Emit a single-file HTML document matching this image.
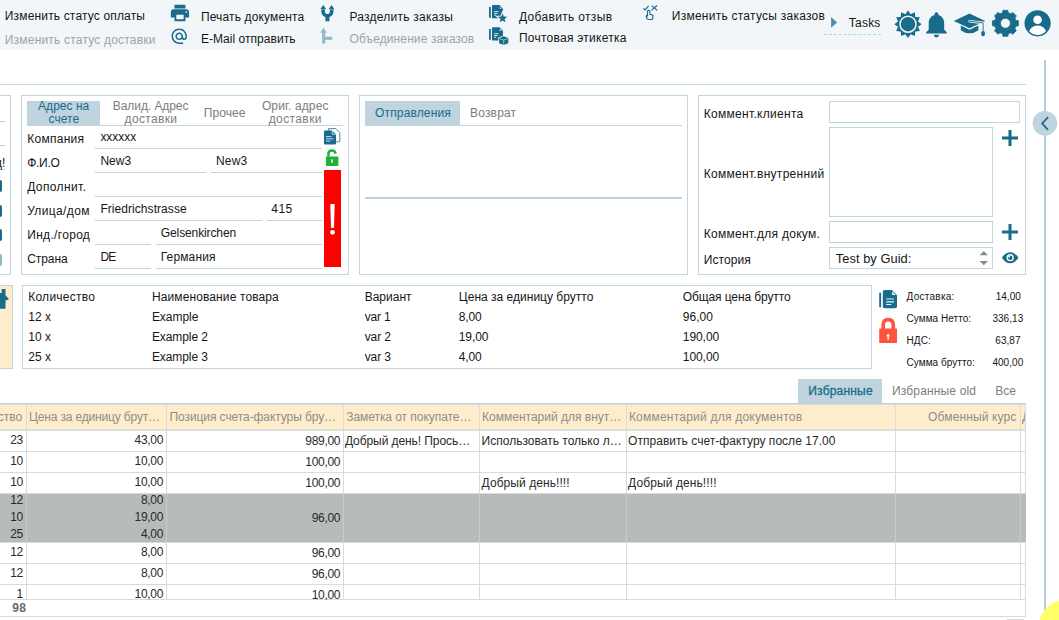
<!DOCTYPE html>
<html lang="ru"><head><meta charset="utf-8"><title>Orders</title>
<style>
html,body{margin:0;padding:0;background:#fff;}
body{width:1059px;height:620px;position:relative;overflow:hidden;font-family:"Liberation Sans",sans-serif;}
.t{position:absolute;white-space:nowrap;line-height:16px;font-size:12px;}
.r{position:absolute;}
svg{position:absolute;overflow:visible;}
</style></head><body>
<div class="r" style="left:0px;top:0px;width:1059px;height:50px;background:#f2f6f8;"></div>
<span class="t" style="top:8px;font-size:12px;color:#161616;letter-spacing:0.161px;left:4.80px;">Изменить статус оплаты</span>
<span class="t" style="top:32px;font-size:12px;color:#a2a2a2;letter-spacing:0.196px;left:4.80px;">Изменить статус доставки</span>
<span class="t" style="top:9px;font-size:12px;color:#161616;letter-spacing:0.144px;left:200.90px;">Печать документа</span>
<span class="t" style="top:31px;font-size:12px;color:#161616;letter-spacing:0.049px;left:200.90px;">E-Mail отправить</span>
<span class="t" style="top:9px;font-size:12px;color:#161616;letter-spacing:0.238px;left:349.50px;">Разделить заказы</span>
<span class="t" style="top:31px;font-size:12px;color:#a2a2a2;letter-spacing:0.113px;left:349.50px;">Объединение заказов</span>
<span class="t" style="top:9px;font-size:12px;color:#161616;letter-spacing:0.327px;left:519.00px;">Добавить отзыв</span>
<span class="t" style="top:30px;font-size:12px;color:#161616;letter-spacing:0.243px;left:519.00px;">Почтовая этикетка</span>
<span class="t" style="top:8px;font-size:12px;color:#161616;letter-spacing:0.249px;left:671.80px;">Изменить статусы заказов</span>
<span class="t" style="top:15px;font-size:12px;color:#161616;letter-spacing:0.225px;left:848.80px;">Tasks</span>
<svg style="left:831px;top:17px" width="8" height="11" viewBox="0 0 8 11"><path d="M0.1 0L6.2 5.4L0.1 10.8Z" fill="#4f8ca7"/></svg>
<div class="r" style="left:824px;top:34px;width:57px;height:0px;background:transparent;border-top:1px dashed #a6daf3;"></div>
<div class="r" style="left:0px;top:84px;width:1026px;height:1px;background:#c3d6e0;"></div>
<div class="r" style="left:1044px;top:60px;width:2px;height:560px;background:#b5cedb;"></div>
<svg style="left:1032px;top:111px" width="26" height="26" viewBox="0 0 26 26"><circle cx="12.9" cy="12.3" r="12.3" fill="#bfd4de"/><path d="M15.6 6.6L10.2 12.5L15.6 18.4" fill="none" stroke="#196b8b" stroke-width="1.8" stroke-linecap="round"/></svg>
<div class="r" style="left:0px;top:95px;width:10px;height:1px;background:#c3d6e0;"></div>
<div class="r" style="left:10px;top:95px;width:1px;height:180px;background:#c3d6e0;"></div>
<div class="r" style="left:0px;top:274px;width:11px;height:1px;background:#c3d6e0;"></div>
<div class="r" style="left:0px;top:121px;width:5px;height:1px;background:#c3d6e0;"></div>
<div class="r" style="left:0px;top:145px;width:5px;height:1px;background:#c3d6e0;"></div>
<div class="r" style="left:0px;top:169px;width:5px;height:1px;background:#c3d6e0;"></div>
<div class="r" style="left:0px;top:180px;width:2px;height:12px;background:#196b8b;border-radius:0 2px 2px 0;"></div>
<div class="r" style="left:0px;top:204.5px;width:2px;height:12.0px;background:#196b8b;border-radius:0 2px 2px 0;"></div>
<div class="r" style="left:0px;top:228.5px;width:2px;height:12.5px;background:#196b8b;border-radius:0 2px 2px 0;"></div>
<div class="r" style="left:0px;top:253.5px;width:2px;height:12.5px;background:#8fb9c9;border-radius:0 2px 2px 0;"></div>
<span class="t" style="top:155px;font-size:12px;color:#161616;letter-spacing:-2.518px;left:-0.20px;left:-5px;letter-spacing:0;">д!</span>
<div class="r" style="left:21px;top:95px;width:326px;height:178px;border:1px solid #c3d6e0;background:transparent;"></div>
<div class="r" style="left:27px;top:101px;width:73px;height:24.5px;background:#bfd4de;"></div>
<div class="r" style="left:27px;top:125px;width:316px;height:1px;background:#c3d6e0;"></div>
<span class="t" style="top:98px;font-size:12px;color:#196b8b;letter-spacing:0.027px;left:38.10px;">Адрес на</span>
<span class="t" style="top:111px;font-size:12px;color:#196b8b;letter-spacing:0.015px;left:48.60px;">счете</span>
<span class="t" style="top:98px;font-size:12px;color:#7d7d7d;letter-spacing:-0.067px;left:112.80px;">Валид. Адрес</span>
<span class="t" style="top:111px;font-size:12px;color:#7d7d7d;letter-spacing:0.345px;left:124.60px;">доставки</span>
<span class="t" style="top:105px;font-size:12px;color:#7d7d7d;letter-spacing:0.049px;left:203.80px;">Прочее</span>
<span class="t" style="top:98px;font-size:12px;color:#7d7d7d;letter-spacing:0.126px;left:261.90px;">Ориг. адрес</span>
<span class="t" style="top:111px;font-size:12px;color:#7d7d7d;letter-spacing:0.395px;left:268.70px;">доставки</span>
<span class="t" style="top:131px;font-size:12px;color:#161616;letter-spacing:0.286px;left:27.20px;">Компания</span>
<span class="t" style="top:155px;font-size:12px;color:#161616;letter-spacing:-0.270px;left:27.20px;">Ф.И.О</span>
<span class="t" style="top:179px;font-size:12px;color:#161616;letter-spacing:0.392px;left:27.20px;">Дополнит.</span>
<span class="t" style="top:203px;font-size:12px;color:#161616;letter-spacing:0.363px;left:27.20px;">Улица/дом</span>
<span class="t" style="top:227px;font-size:12px;color:#161616;letter-spacing:0.321px;left:27.20px;">Инд./город</span>
<span class="t" style="top:251px;font-size:12px;color:#161616;letter-spacing:-0.051px;left:27.20px;">Страна</span>
<div class="r" style="left:95px;top:148px;width:227px;height:1px;background:#c3d6e0;"></div>
<div class="r" style="left:95px;top:172px;width:111px;height:1px;background:#c3d6e0;"></div>
<div class="r" style="left:211px;top:172px;width:111px;height:1px;background:#c3d6e0;"></div>
<div class="r" style="left:95px;top:196px;width:227px;height:1px;background:#c3d6e0;"></div>
<div class="r" style="left:95px;top:220px;width:167px;height:1px;background:#c3d6e0;"></div>
<div class="r" style="left:267px;top:220px;width:55px;height:1px;background:#c3d6e0;"></div>
<div class="r" style="left:95px;top:244px;width:56px;height:1px;background:#c3d6e0;"></div>
<div class="r" style="left:156px;top:244px;width:166px;height:1px;background:#c3d6e0;"></div>
<div class="r" style="left:95px;top:268px;width:56px;height:1px;background:#c3d6e0;"></div>
<div class="r" style="left:156px;top:268px;width:166px;height:1px;background:#c3d6e0;"></div>
<span class="t" style="top:129px;font-size:12px;color:#161616;letter-spacing:-0.050px;left:100.40px;">xxxxxx</span>
<span class="t" style="top:153px;font-size:12px;color:#161616;letter-spacing:0.005px;left:100.40px;">New3</span>
<span class="t" style="top:153px;font-size:12px;color:#161616;letter-spacing:0.180px;left:216.00px;">New3</span>
<span class="t" style="top:201px;font-size:12px;color:#161616;letter-spacing:0.059px;left:100.40px;">Friedrichstrasse</span>
<span class="t" style="top:201px;font-size:12px;color:#161616;letter-spacing:0.427px;left:271.30px;">415</span>
<span class="t" style="top:225px;font-size:12px;color:#161616;letter-spacing:-0.115px;left:160.80px;">Gelsenkirchen</span>
<span class="t" style="top:249px;font-size:12px;color:#161616;letter-spacing:-0.885px;left:100.40px;">DE</span>
<span class="t" style="top:249px;font-size:12px;color:#161616;letter-spacing:0.126px;left:160.80px;">Германия</span>
<div class="r" style="left:324px;top:170px;width:17px;height:97px;background:#ff0000;"></div>
<svg style="left:324px;top:170px" width="17" height="97" viewBox="0 0 17 97"><path d="M6.3 34L10.7 34L10 58L7 58Z" fill="#fff"/><circle cx="8.5" cy="62.3" r="2.4" fill="#fff"/></svg>
<div class="r" style="left:359px;top:95px;width:327px;height:178px;border:1px solid #c3d6e0;background:transparent;"></div>
<div class="r" style="left:365px;top:101px;width:95px;height:24.5px;background:#bfd4de;"></div>
<div class="r" style="left:365px;top:125px;width:317px;height:1px;background:#c3d6e0;"></div>
<div class="r" style="left:365px;top:197px;width:317px;height:2px;background:#bcd1dc;"></div>
<span class="t" style="top:105px;font-size:12px;color:#196b8b;letter-spacing:0.139px;left:375.10px;">Отправления</span>
<span class="t" style="top:105px;font-size:12px;color:#7d7d7d;letter-spacing:0.186px;left:470.00px;">Возврат</span>
<div class="r" style="left:698px;top:95px;width:326px;height:178px;border:1px solid #c3d6e0;background:transparent;"></div>
<span class="t" style="top:106px;font-size:12px;color:#161616;letter-spacing:0.301px;left:703.70px;">Коммент.клиента</span>
<span class="t" style="top:166px;font-size:12px;color:#161616;letter-spacing:0.291px;left:703.70px;">Коммент.внутренний</span>
<span class="t" style="top:226px;font-size:12px;color:#161616;letter-spacing:0.283px;left:703.70px;">Коммент.для докум.</span>
<span class="t" style="top:252px;font-size:12px;color:#161616;letter-spacing:0.095px;left:703.70px;">История</span>
<div class="r" style="left:829px;top:101px;width:189px;height:20px;border:1px solid #c3d6e0;background:transparent;"></div>
<div class="r" style="left:829px;top:127px;width:162px;height:88px;border:1px solid #c3d6e0;background:transparent;"></div>
<div class="r" style="left:829px;top:221px;width:162px;height:20px;border:1px solid #c3d6e0;background:transparent;"></div>
<div class="r" style="left:829px;top:247px;width:162px;height:20px;border:1px solid #c3d6e0;background:transparent;"></div>
<span class="t" style="top:251px;font-size:12.8px;color:#161616;letter-spacing:0.070px;left:835.80px;">Test by Guid:</span>
<svg style="left:979px;top:250px" width="10" height="16" viewBox="0 0 10 16"><path d="M0.6 5.2L4.8 1L9 5.2Z M0.6 11L4.8 15.2L9 11Z" fill="#8b8b8b"/></svg>
<svg style="left:1002px;top:129.5px" width="16" height="16" viewBox="0 0 16 16"><path d="M6.5 0H9.5V6.5H16V9.5H9.5V16H6.5V9.5H0V6.5H6.5Z" fill="#196b8b"/></svg>
<svg style="left:1002px;top:223.7px" width="16" height="16" viewBox="0 0 16 16"><path d="M6.5 0H9.5V6.5H16V9.5H9.5V16H6.5V9.5H0V6.5H6.5Z" fill="#196b8b"/></svg>
<div class="r" style="left:0px;top:285px;width:12px;height:84px;background:#feedcb;"></div>
<div class="r" style="left:0px;top:285px;width:13px;height:1px;background:#c3d6e0;"></div>
<div class="r" style="left:12px;top:285px;width:1px;height:84px;background:#c3d6e0;"></div>
<div class="r" style="left:0px;top:368px;width:13px;height:1px;background:#c3d6e0;"></div>
<div class="r" style="left:22px;top:285px;width:848px;height:82px;border:1px solid #c3d6e0;background:transparent;"></div>
<span class="t" style="top:289px;font-size:12px;color:#161616;letter-spacing:0.266px;left:28.20px;">Количество</span>
<span class="t" style="top:289px;font-size:12px;color:#161616;letter-spacing:0.115px;left:151.90px;">Наименование товара</span>
<span class="t" style="top:289px;font-size:12px;color:#161616;letter-spacing:-0.007px;left:364.70px;">Вариант</span>
<span class="t" style="top:289px;font-size:12px;color:#161616;letter-spacing:0.014px;left:458.80px;">Цена за единицу брутто</span>
<span class="t" style="top:289px;font-size:12px;color:#161616;letter-spacing:-0.110px;left:682.80px;">Общая цена брутто</span>
<span class="t" style="top:309px;font-size:12px;color:#161616;letter-spacing:0.055px;left:28.20px;">12 x</span>
<span class="t" style="top:309px;font-size:12px;color:#161616;letter-spacing:-0.027px;left:151.90px;">Example</span>
<span class="t" style="top:309px;font-size:12px;color:#161616;letter-spacing:-0.195px;left:364.70px;">var 1</span>
<span class="t" style="top:309px;font-size:12px;color:#161616;letter-spacing:-0.138px;left:458.80px;">8,00</span>
<span class="t" style="top:309px;font-size:12px;color:#161616;letter-spacing:0.035px;left:682.80px;">96,00</span>
<span class="t" style="top:329px;font-size:12px;color:#161616;letter-spacing:0.055px;left:28.20px;">10 x</span>
<span class="t" style="top:329px;font-size:12px;color:#161616;letter-spacing:-0.077px;left:151.90px;">Example 2</span>
<span class="t" style="top:329px;font-size:12px;color:#161616;letter-spacing:-0.095px;left:364.70px;">var 2</span>
<span class="t" style="top:329px;font-size:12px;color:#161616;letter-spacing:-0.105px;left:458.80px;">19,00</span>
<span class="t" style="top:329px;font-size:12px;color:#161616;letter-spacing:-0.067px;left:682.80px;">190,00</span>
<span class="t" style="top:349px;font-size:12px;color:#161616;letter-spacing:0.055px;left:28.20px;">25 x</span>
<span class="t" style="top:349px;font-size:12px;color:#161616;letter-spacing:-0.077px;left:151.90px;">Example 3</span>
<span class="t" style="top:349px;font-size:12px;color:#161616;letter-spacing:-0.095px;left:364.70px;">var 3</span>
<span class="t" style="top:349px;font-size:12px;color:#161616;letter-spacing:-0.138px;left:458.80px;">4,00</span>
<span class="t" style="top:349px;font-size:12px;color:#161616;letter-spacing:-0.067px;left:682.80px;">100,00</span>
<span class="t" style="top:289px;font-size:10px;color:#161616;letter-spacing:0.253px;left:906.60px;">Доставка:</span>
<span class="t" style="top:289px;font-size:10px;color:#161616;letter-spacing:-0.024px;left:995.80px;">14,00</span>
<span class="t" style="top:311px;font-size:10px;color:#161616;letter-spacing:0.039px;left:906.60px;">Сумма Нетто:</span>
<span class="t" style="top:311px;font-size:10px;color:#161616;letter-spacing:0.053px;left:992.40px;">336,13</span>
<span class="t" style="top:333px;font-size:10px;color:#161616;letter-spacing:0.052px;left:906.60px;">НДС:</span>
<span class="t" style="top:333px;font-size:10px;color:#161616;letter-spacing:0.056px;left:995.30px;">63,87</span>
<span class="t" style="top:355px;font-size:10px;color:#161616;letter-spacing:0.034px;left:906.60px;">Сумма брутто:</span>
<span class="t" style="top:355px;font-size:10px;color:#161616;letter-spacing:0.053px;left:992.40px;">400,00</span>
<div class="r" style="left:798px;top:379px;width:84px;height:25px;background:#bfd4de;"></div>
<span class="t" style="top:383px;font-size:12px;color:#196b8b;letter-spacing:0.193px;left:808.30px;-webkit-text-stroke:0.3px #196b8b;">Избранные</span>
<span class="t" style="top:383px;font-size:12px;color:#7d7d7d;letter-spacing:0.153px;left:892.00px;">Избранные old</span>
<span class="t" style="top:383px;font-size:12px;color:#7d7d7d;letter-spacing:-0.059px;left:995.30px;">Все</span>
<div class="r" style="left:0px;top:403px;width:1026px;height:1px;background:#bfd3de;"></div>
<div class="r" style="left:0px;top:404px;width:1026px;height:1px;background:#d9dee0;"></div>
<div class="r" style="left:0px;top:405px;width:1026px;height:25px;background:#feedcb;"></div>
<div class="r" style="left:0px;top:429px;width:1026px;height:2px;background:#dddddd;"></div>
<div class="r" style="left:26px;top:405px;width:1px;height:25px;background:#dcdcdc;"></div>
<div class="r" style="left:26px;top:430px;width:1px;height:169px;background:#dadada;"></div>
<div class="r" style="left:166px;top:405px;width:1px;height:25px;background:#dcdcdc;"></div>
<div class="r" style="left:166px;top:430px;width:1px;height:169px;background:#dadada;"></div>
<div class="r" style="left:343px;top:405px;width:1px;height:25px;background:#dcdcdc;"></div>
<div class="r" style="left:343px;top:430px;width:1px;height:169px;background:#dadada;"></div>
<div class="r" style="left:479px;top:405px;width:1px;height:25px;background:#dcdcdc;"></div>
<div class="r" style="left:479px;top:430px;width:1px;height:169px;background:#dadada;"></div>
<div class="r" style="left:626px;top:405px;width:1px;height:25px;background:#dcdcdc;"></div>
<div class="r" style="left:626px;top:430px;width:1px;height:169px;background:#dadada;"></div>
<div class="r" style="left:895px;top:405px;width:1px;height:25px;background:#dcdcdc;"></div>
<div class="r" style="left:895px;top:430px;width:1px;height:169px;background:#dadada;"></div>
<div class="r" style="left:1020px;top:405px;width:1px;height:25px;background:#dcdcdc;"></div>
<div class="r" style="left:1020px;top:430px;width:1px;height:169px;background:#dadada;"></div>
<div class="r" style="left:1025px;top:405px;width:1px;height:212px;background:#dadada;"></div>
<span class="t" style="top:409px;font-size:12px;color:#8d8d8d;right:1036.80px;letter-spacing:-0.3px;letter-spacing:0;">ство</span>
<span class="t" style="top:409px;font-size:12px;color:#8d8d8d;letter-spacing:-0.159px;left:29.00px;">Цена за единицу брут…</span>
<span class="t" style="top:409px;font-size:12px;color:#8d8d8d;letter-spacing:-0.083px;left:169.50px;">Позиция счета-фактуры бру…</span>
<span class="t" style="top:409px;font-size:12px;color:#8d8d8d;letter-spacing:-0.050px;left:346.20px;">Заметка от покупате…</span>
<span class="t" style="top:409px;font-size:12px;color:#8d8d8d;letter-spacing:-0.002px;left:482.10px;">Комментарий для внут…</span>
<span class="t" style="top:409px;font-size:12px;color:#8d8d8d;letter-spacing:0.222px;left:628.90px;">Комментарий для документов</span>
<span class="t" style="top:409px;font-size:12px;color:#8d8d8d;letter-spacing:0.123px;left:928.10px;">Обменный курс</span>
<span class="t" style="top:409px;font-size:12px;color:#8d8d8d;left:1021.90px;clip-path:inset(0 0 0 0);width:3px;overflow:hidden;">Д</span>
<div class="r" style="left:0px;top:493px;width:1026px;height:49px;background:#b7bbba;"></div>
<div class="r" style="left:0px;top:451px;width:1026px;height:1px;background:#dadada;"></div>
<div class="r" style="left:0px;top:472px;width:1026px;height:1px;background:#dadada;"></div>
<div class="r" style="left:0px;top:493px;width:1026px;height:1px;background:#dadada;"></div>
<div class="r" style="left:0px;top:542px;width:1026px;height:1px;background:#dadada;"></div>
<div class="r" style="left:0px;top:563px;width:1026px;height:1px;background:#dadada;"></div>
<div class="r" style="left:0px;top:584px;width:1026px;height:1px;background:#dadada;"></div>
<div class="r" style="left:0px;top:599px;width:1026px;height:1px;background:#dadada;"></div>
<div class="r" style="left:0px;top:616px;width:1026px;height:1px;background:#dadada;"></div>
<div class="r" style="left:26px;top:493px;width:1px;height:49px;background:#c9cccb;"></div>
<div class="r" style="left:166px;top:493px;width:1px;height:49px;background:#c9cccb;"></div>
<div class="r" style="left:343px;top:493px;width:1px;height:49px;background:#c9cccb;"></div>
<div class="r" style="left:479px;top:493px;width:1px;height:49px;background:#c9cccb;"></div>
<div class="r" style="left:626px;top:493px;width:1px;height:49px;background:#c9cccb;"></div>
<div class="r" style="left:895px;top:493px;width:1px;height:49px;background:#c9cccb;"></div>
<div class="r" style="left:1020px;top:493px;width:1px;height:49px;background:#c9cccb;"></div>
<span class="t" style="top:432px;font-size:12px;color:#2a2a2a;right:1036.10px;letter-spacing:-0.3px;">23</span>
<span class="t" style="top:432px;font-size:12px;color:#2a2a2a;right:895.90px;letter-spacing:-0.3px;">43,00</span>
<span class="t" style="top:433px;font-size:12px;color:#2a2a2a;right:718.80px;letter-spacing:-0.3px;">989,00</span>
<span class="t" style="top:453px;font-size:12px;color:#2a2a2a;right:1036.10px;letter-spacing:-0.3px;">10</span>
<span class="t" style="top:453px;font-size:12px;color:#2a2a2a;right:895.90px;letter-spacing:-0.3px;">10,00</span>
<span class="t" style="top:454px;font-size:12px;color:#2a2a2a;right:718.80px;letter-spacing:-0.3px;">100,00</span>
<span class="t" style="top:474px;font-size:12px;color:#2a2a2a;right:1036.10px;letter-spacing:-0.3px;">10</span>
<span class="t" style="top:474px;font-size:12px;color:#2a2a2a;right:895.90px;letter-spacing:-0.3px;">10,00</span>
<span class="t" style="top:475px;font-size:12px;color:#2a2a2a;right:718.80px;letter-spacing:-0.3px;">100,00</span>
<span class="t" style="top:544px;font-size:12px;color:#2a2a2a;right:1036.10px;letter-spacing:-0.3px;">12</span>
<span class="t" style="top:544px;font-size:12px;color:#2a2a2a;right:895.90px;letter-spacing:-0.3px;">8,00</span>
<span class="t" style="top:545px;font-size:12px;color:#2a2a2a;right:718.80px;letter-spacing:-0.3px;">96,00</span>
<span class="t" style="top:565px;font-size:12px;color:#2a2a2a;right:1036.10px;letter-spacing:-0.3px;">12</span>
<span class="t" style="top:565px;font-size:12px;color:#2a2a2a;right:895.90px;letter-spacing:-0.3px;">8,00</span>
<span class="t" style="top:566px;font-size:12px;color:#2a2a2a;right:718.80px;letter-spacing:-0.3px;">96,00</span>
<span class="t" style="top:586px;font-size:12px;color:#2a2a2a;right:1036.10px;letter-spacing:-0.3px;">1</span>
<span class="t" style="top:586px;font-size:12px;color:#2a2a2a;right:895.90px;letter-spacing:-0.3px;">10,00</span>
<span class="t" style="top:587px;font-size:12px;color:#2a2a2a;right:718.80px;letter-spacing:-0.3px;">10,00</span>
<span class="t" style="top:492px;font-size:12px;color:#2a2a2a;right:1036.10px;letter-spacing:-0.3px;">12</span>
<span class="t" style="top:492px;font-size:12px;color:#2a2a2a;right:895.90px;letter-spacing:-0.3px;">8,00</span>
<span class="t" style="top:509px;font-size:12px;color:#2a2a2a;right:1036.10px;letter-spacing:-0.3px;">10</span>
<span class="t" style="top:509px;font-size:12px;color:#2a2a2a;right:895.90px;letter-spacing:-0.3px;">19,00</span>
<span class="t" style="top:526px;font-size:12px;color:#2a2a2a;right:1036.10px;letter-spacing:-0.3px;">25</span>
<span class="t" style="top:526px;font-size:12px;color:#2a2a2a;right:895.90px;letter-spacing:-0.3px;">4,00</span>
<span class="t" style="top:510px;font-size:12px;color:#2a2a2a;right:718.80px;letter-spacing:-0.3px;">96,00</span>
<span class="t" style="top:433px;font-size:12px;color:#2a2a2a;letter-spacing:-0.073px;left:344.90px;">Добрый день! Прось…</span>
<span class="t" style="top:433px;font-size:12px;color:#2a2a2a;letter-spacing:0.011px;left:481.60px;">Использовать только л…</span>
<span class="t" style="top:433px;font-size:12px;color:#2a2a2a;letter-spacing:0.032px;left:628.10px;">Отправить счет-фактуру после 17.00</span>
<span class="t" style="top:475px;font-size:12px;color:#2a2a2a;letter-spacing:0.065px;left:481.60px;">Добрый день!!!!</span>
<span class="t" style="top:475px;font-size:12px;color:#2a2a2a;letter-spacing:0.098px;left:628.10px;">Добрый день!!!!</span>
<div class="r" style="left:0px;top:600px;width:1025px;height:16px;background:#fff;"></div>
<span class="t" style="top:600px;font-size:12px;color:#6a6a6a;font-weight:bold;letter-spacing:0.327px;left:12.30px;">98</span>
<div class="r" style="left:1007px;top:619px;width:17px;height:1px;background:#dadada;"></div>
<svg style="left:1030px;top:595px" width="29" height="25" viewBox="1030 595 29 25"><circle cx="1064" cy="625" r="24.6" fill="#ffff66"/></svg>
<svg style="left:169.17px;top:2.36px" width="21.91" height="21.91" viewBox="0 0 24 24"><path fill="#196b8b" d="M19 8H5c-1.66 0-3 1.34-3 3v6h4v4h12v-4h4v-6c0-1.66-1.34-3-3-3zm-3 11H8v-5h8v5zm3-7c-.55 0-1-.45-1-1s.45-1 1-1 1 .45 1 1-.45 1-1 1zm-1-9H6v4h12V3z"/></svg>
<svg style="left:170.06px;top:26.76px" width="18.48" height="18.48" viewBox="0 0 24 24"><path fill="#196b8b" d="M12 2C6.48 2 2 6.48 2 12s4.48 10 10 10h5v-2h-5c-4.34 0-8-3.66-8-8s3.66-8 8-8 8 3.66 8 8v1.43c0 .79-.71 1.57-1.5 1.57s-1.5-.78-1.5-1.57V12c0-2.76-2.24-5-5-5s-5 2.24-5 5 2.24 5 5 5c1.38 0 2.64-.56 3.54-1.47.65.89 1.77 1.47 2.96 1.47 1.97 0 3.5-1.6 3.5-3.57V12c0-5.52-4.48-10-10-10zm0 13c-1.66 0-3-1.34-3-3s1.34-3 3-3 3 1.34 3 3-1.34 3-3 3z"/></svg>
<svg style="left:320.00px;top:4.00px" width="15.00" height="18.00" viewBox="320 4 15 18"><g fill="#196b8b" stroke="none"><path d="M320.2 9.3L323.3 4.9L326.2 9.3Z"/><path d="M328.6 9.3L331.5 4.9L334.5 9.3Z"/><rect x="325.4" y="16" width="4" height="5.3"/></g><path d="M323.1 9.6V11.4A4.3 4.3 0 0 0 331.7 11.4V9.6" fill="none" stroke="#196b8b" stroke-width="3.6"/></svg>
<svg style="left:320.00px;top:27.00px" width="14.00" height="18.00" viewBox="320 27 14 18"><path d="M320.2 32.8L323.5 27.8L326.8 32.8Z" fill="#8fb8ca"/><path d="M323.7 32.3V43.5M323.7 38.3H332.2" fill="none" stroke="#8fb8ca" stroke-width="3.1"/></svg>
<svg style="left:488.00px;top:4.00px" width="21.00" height="19.00" viewBox="488 4 21 19"><path d="M489 6.8999999999999995H490.8V18.0L489 17.4Z" fill="#196b8b"/><path d="M492 6.0Q492 5.1 492.9 5.1H499.4L503 8.899999999999999V17.4Q503 18.299999999999997 502.1 18.299999999999997H492.9Q492 18.299999999999997 492 17.4Z" fill="#196b8b"/><path d="M499.6 6.699999999999999V8.8H501.7Z" fill="#dbe8ee"/><path d="M494.2 11.6H498.4M494.2 13.4H497.6M494.2 15.2H496.2" stroke="#e4eef2" stroke-width="0.9" fill="none"/><path d="M502.60,13.40L503.83,16.60L507.26,16.79L504.60,18.95L505.48,22.26L502.60,20.40L499.72,22.26L500.60,18.95L497.94,16.79L501.37,16.60Z" fill="#196b8b" stroke="#f2f6f8" stroke-width="2.2" paint-order="stroke"/></svg>
<svg style="left:488.00px;top:26.00px" width="21.00" height="20.00" viewBox="488 26 21 20"><path d="M489 29.0H490.8V40.1L489 39.5Z" fill="#196b8b"/><path d="M492 28.099999999999998Q492 27.2 492.9 27.2H499.4L503 31.0V39.5Q503 40.4 502.1 40.4H492.9Q492 40.4 492 39.5Z" fill="#196b8b"/><path d="M499.6 28.8V30.9H501.7Z" fill="#dbe8ee"/><path d="M494.2 33.7H498.4M494.2 35.5H497.6M494.2 37.3H496.2" stroke="#e4eef2" stroke-width="0.9" fill="none"/><path d="M499.1 38L503.7 36.3L508.3 38V43.3L503.7 44.9L499.1 43.3Z" fill="#196b8b" stroke="#f2f6f8" stroke-width="1.7" paint-order="stroke"/><path d="M499.6 38.6L503.7 40L507.8 38.6M503.7 40V44.7" stroke="#e4eef2" stroke-width="0.6" fill="none"/></svg>
<svg style="left:642.00px;top:4.00px" width="17.00" height="18.00" viewBox="642 4 17 18"><path d="M643.3 8.4L645.2 9.9L648.6 5.8" fill="none" stroke="#196b8b" stroke-width="1.2"/><path d="M651.7 5.6L657.2 10.4M657 5.5L651.5 10.4" fill="none" stroke="#196b8b" stroke-width="1.2"/><path d="M647.5 15.6V11.5Q647.5 10.4 648.7 10.4Q649.9 10.4 649.9 11.5V14.3L652.2 14.9Q653.1 15.2 653 16.2L652.7 18.3Q652.5 19.5 651.4 19.5H648.6Q647.7 19.5 647.2 18.7L646.2 16.7Q645.9 15.9 646.6 15.6Q647.1 15.4 647.5 16.1Z" fill="none" stroke="#196b8b" stroke-width="1.15" stroke-linejoin="round"/></svg>
<svg style="left:894.00px;top:10.00px" width="28.00" height="29.00" viewBox="894 10 28 29"><path d="M908.00,10.50L910.67,14.25L914.85,12.34L915.28,16.92L919.86,17.35L917.95,21.53L921.70,24.20L917.95,26.87L919.86,31.05L915.28,31.48L914.85,36.06L910.67,34.15L908.00,37.90L905.33,34.15L901.15,36.06L900.72,31.48L896.14,31.05L898.05,26.87L894.30,24.20L898.05,21.53L896.14,17.35L900.72,16.92L901.15,12.34L905.33,14.25Z" fill="#196b8b"/><circle cx="908" cy="24.2" r="8" fill="#196b8b" stroke="#f2f6f8" stroke-width="1.5"/></svg>
<svg style="left:920.85px;top:8.57px" width="30.90" height="31.02" viewBox="0 0 24 24" preserveAspectRatio="none"><path fill="#196b8b" d="M12 22c1.1 0 2-.9 2-2h-4c0 1.1.89 2 2 2zm6-6v-5c0-3.07-1.64-5.64-4.5-6.32V4c0-.83-.67-1.5-1.5-1.5s-1.5.67-1.5 1.5v.68C7.63 5.36 6 7.92 6 11v5l-2 2v1h16v-1l-2-2z"/></svg>
<svg style="left:953.00px;top:13.00px" width="33.00" height="24.00" viewBox="953 13 33 24"><path d="M953.8 20.9L969.5 13.6L985.2 20.9L969.5 28.3Z" fill="#196b8b"/><path d="M960.8 25.6L969.5 29.7L978.4 25.6V30.3Q974.5 33.3 969.5 33.3Q964.6 33.3 960.8 30.3Z" fill="#196b8b"/><path d="M969.5 21.2L983.1 22.9V31.4" fill="none" stroke="#f2f6f8" stroke-width="2.6" stroke-linecap="round" stroke-linejoin="round"/><path d="M969.5 21.2L983.1 22.9V31.4" fill="none" stroke="#196b8b" stroke-width="0.9" stroke-linejoin="round"/><circle cx="969.5" cy="21.2" r="0.6" fill="#196b8b"/><rect x="981.3" y="31" width="3.6" height="5.2" rx="1.6" fill="#196b8b"/></svg>
<svg style="left:991.00px;top:9.00px" width="29.00" height="29.00" viewBox="991 9 29 29"><path d="M1002.52,12.79L1002.93,10.33L1007.87,10.33L1008.28,12.79L1010.80,13.83L1012.82,12.38L1016.32,15.88L1014.87,17.90L1015.91,20.42L1018.37,20.83L1018.37,25.77L1015.91,26.18L1014.87,28.70L1016.32,30.72L1012.82,34.22L1010.80,32.77L1008.28,33.81L1007.87,36.27L1002.93,36.27L1002.52,33.81L1000.00,32.77L997.98,34.22L994.48,30.72L995.93,28.70L994.89,26.18L992.43,25.77L992.43,20.83L994.89,20.42L995.93,17.90L994.48,15.88L997.98,12.38L1000.00,13.83ZM1010.4 23.3A5.0 5.0 0 1 0 1000.4 23.3A5.0 5.0 0 1 0 1010.4 23.3Z" fill="#196b8b" fill-rule="evenodd" stroke="#196b8b" stroke-width="0.8" stroke-linejoin="round"/></svg>
<svg style="left:1024.00px;top:9.00px" width="29.00" height="29.00" viewBox="1024 9 29 29"><defs><clipPath id="uc"><circle cx="1037.6" cy="23.3" r="11.6"/></clipPath></defs><circle cx="1037.6" cy="23.3" r="13.1" fill="#196b8b"/><circle cx="1037.6" cy="19.7" r="4.3" fill="#fff"/><ellipse cx="1037.6" cy="33" rx="8.7" ry="7.6" fill="#fff" clip-path="url(#uc)"/></svg>
<svg style="left:323.00px;top:128.00px" width="18.00" height="17.00" viewBox="323 128 18 17"><path d="M328.6 128.6H335.8L339.8 132.6V140.8Q339.8 141.8 338.8 141.8H328.6Z" fill="#fff" stroke="#196b8b" stroke-width="0.8"/><path d="M324 131.6Q324 130.6 325 130.6H332L336 134.6V143.4Q336 144.4 335 144.4H325Q324 144.4 324 143.4Z" fill="#196b8b"/><path d="M326 136.6H331.5M326 138.8H333.5M326 141H330.5" stroke="#dbe8ee" stroke-width="0.9" fill="none"/><path d="M332.3 131.2V134.3H335.5" fill="none" stroke="#fff" stroke-width="0.7"/></svg>
<svg style="left:325.00px;top:149.00px" width="14.00" height="17.00" viewBox="325 149 14 17"><rect x="325.9" y="156.4" width="12.5" height="9.5" rx="0.6" fill="#1fb33c"/><path d="M328.4 156.8V154.2Q328.4 150.6 332 150.6Q335 150.6 335.7 153.6" fill="none" stroke="#1fb33c" stroke-width="2.5"/><rect x="331.4" y="159.4" width="1.4" height="3.4" fill="#fff"/></svg>
<svg style="left:1001.00px;top:251.00px" width="19.00" height="13.00" viewBox="1001 251 19 13"><path d="M1001.9 257.7Q1005.5 252.2 1010.2 252.2Q1014.9 252.2 1018.4 257.7Q1014.9 263.3 1010.2 263.3Q1005.5 263.3 1001.9 257.7Z" fill="#196b8b"/><circle cx="1010.2" cy="257.7" r="3.6" fill="#fff"/><circle cx="1010.2" cy="257.7" r="2.3" fill="#196b8b"/><circle cx="1009.2" cy="256.7" r="0.9" fill="#fff"/></svg>
<svg style="left:878.00px;top:289.00px" width="20.00" height="20.00" viewBox="878 289 20 20"><path d="M879.2 292.7H881.1V307.5L879.2 306.9Z" fill="#196b8b"/><path d="M882.8 291.8Q882.8 290.1 884.5 290.1H891.8L897 295.3V306.6Q897 308.3 895.3 308.3H884.5Q882.8 308.3 882.8 306.6Z" fill="#196b8b"/><path d="M892.2 291.5V294.9H895.7Z" fill="#fff"/><path d="M886.2 299H894M886.2 301.8H894M886.2 304.5H891.3" stroke="#eef4f7" stroke-width="1.15" fill="none"/></svg>
<svg style="left:878.00px;top:316.00px" width="20.00" height="28.00" viewBox="878 316 20 28"><rect x="879.2" y="328.4" width="17.8" height="14.5" rx="0.5" fill="#fb5540"/><path d="M883.2 329V325.2Q883.2 319.6 888.2 319.6Q893.3 319.6 893.3 325.2V329" fill="none" stroke="#fb5540" stroke-width="3.6"/><path d="M888.1 333.6L889.9 336.2H888.8V339.8H887.4V336.2H886.3Z" fill="#fff"/></svg>
<svg style="left:0.00px;top:288.00px" width="10.00" height="22.00" viewBox="0 288 10 22"><path d="M-2 293H1.6V289H5.5V295.2L8.8 299L8.6 299.6L5.5 300.6V308.7H-2Z" fill="#196b8b"/></svg>
</body></html>
